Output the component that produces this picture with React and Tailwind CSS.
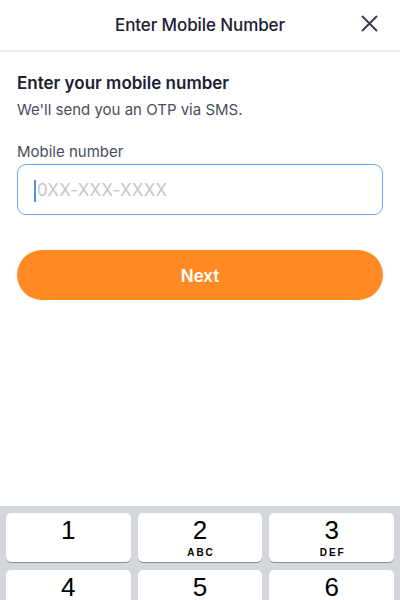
import React from 'react'

const keys = [
  { d: '1', l: '' },
  { d: '2', l: 'ABC' },
  { d: '3', l: 'DEF' },
  { d: '4', l: 'GHI' },
  { d: '5', l: 'JKL' },
  { d: '6', l: 'MNO' },
]

const App = () => {
  return (
    <div className="w-[400px] h-[600px] bg-white flex flex-col overflow-hidden" style={{ fontFamily: 'Inter, "Noto Sans", sans-serif' }}>
      {/* header */}
      <div className="relative h-[52px] flex items-center justify-center border-b-2 border-[#ececec] shrink-0 pt-[2px]">
        <h1 className="text-[17px] font-medium text-[#1c2033] tracking-[-0.1px]">Enter Mobile Number</h1>
        <button className="absolute right-[22px] top-[15px] text-[#3b3f4e]">
          <svg width="17" height="17" viewBox="0 0 17 17" fill="none" stroke="currentColor" strokeWidth="2" strokeLinecap="round">
            <path d="M1.5 1.5 L15.5 15.5 M15.5 1.5 L1.5 15.5" />
          </svg>
        </button>
      </div>

      <div className="px-[17px] flex-1 flex flex-col">
        <h2 className="mt-[19px] text-[17px] font-semibold text-[#1c2033] leading-[24px]">Enter your mobile number</h2>
        <p className="mt-[4px] text-[15px] text-[#4a4e5c] leading-[22px]">We'll send you an OTP via SMS.</p>
        <label className="mt-[20px] text-[15px] text-[#4a4e5c] leading-[22px]">Mobile number</label>
        <div className="mt-[1px] h-[51px] border-[1.5px] border-[#6aa5f5] rounded-[9px] flex items-center pl-[16px] pt-[3px]">
          <span className="w-[2px] h-[22px] bg-[#4f8ff0] mr-[1px]" />
          <span className="text-[17px] text-[#c4c6cb] tracking-[0.2px]">0XX-XXX-XXXX</span>
        </div>
        <button className="mt-[35px] h-[50px] w-full rounded-full bg-[#ff8a24] text-white text-[17px] font-semibold pt-[4px]">
          Next
        </button>
      </div>

      {/* keyboard */}
      <div className="bg-[#d3d6db] h-[94px] shrink-0 px-[6px] pt-[7px] grid grid-cols-3 gap-x-[7px] gap-y-[8px] content-start" style={{ fontFamily: '"Liberation Sans", sans-serif' }}>
        {keys.map(k => (
          <div key={k.d} className="h-[49px] bg-white rounded-[5px] shadow-[0_1px_0_#8b8e93] flex flex-col items-center pt-[2px]">
            <span className="text-[26px] leading-[30px] text-black">{k.d}</span>
            {k.l && <span className="mt-[2px] text-[10px] font-bold tracking-[2px] text-black leading-[12px] pl-[2px]">{k.l}</span>}
          </div>
        ))}
      </div>
    </div>
  )
}

export default App
